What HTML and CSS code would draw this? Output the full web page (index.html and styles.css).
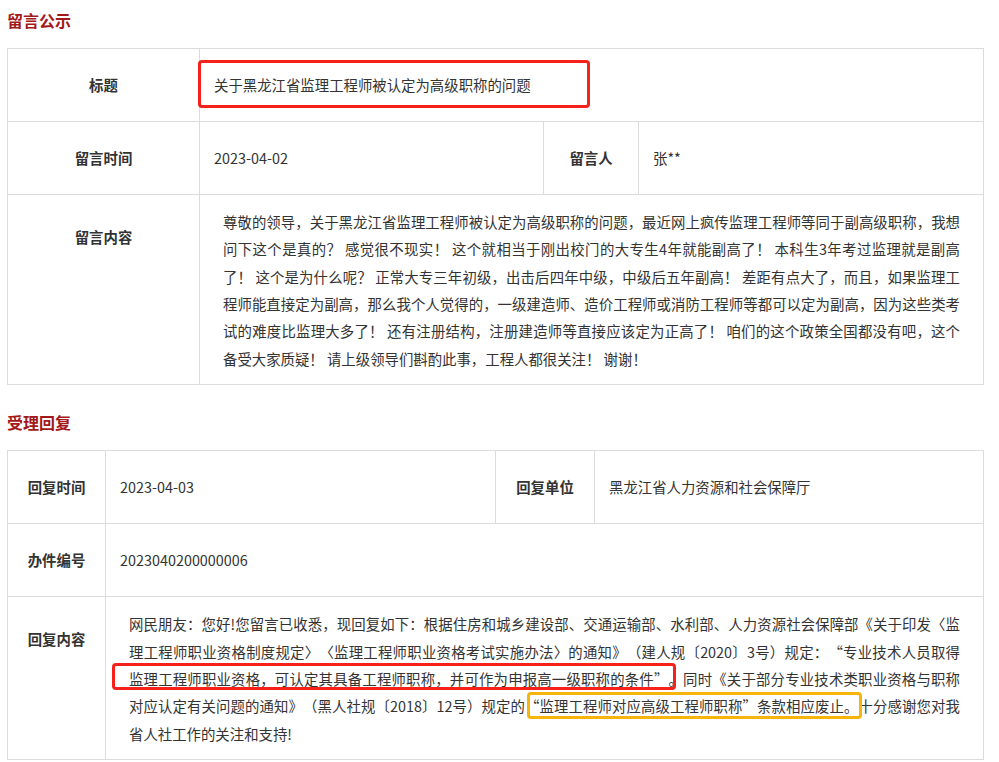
FILE: index.html
```html
<!DOCTYPE html>
<html lang="zh-CN">
<head>
<meta charset="utf-8">
<title>留言公示</title>
<link rel="stylesheet" href="styles.css">
</head>
<body>
<div class="page">
  <h2 class="sec-title">留言公示</h2>
  <div class="info-grid msg">
    <div class="cell label">标题</div>
    <div class="cell value span3"><span class="title-mark">关于黑龙江省监理工程师被认定为高级职称的问题</span></div>
    <div class="cell label">留言时间</div>
    <div class="cell value">2023-04-02</div>
    <div class="cell label">留言人</div>
    <div class="cell value">张**</div>
    <div class="cell label top">留言内容</div>
    <div class="cell content span3">尊敬的领导，关于黑龙江省监理工程师被认定为高级职称的问题，最近网上疯传监理工程师等同于副高级职称，我想问下这个是真的？ 感觉很不现实！ 这个就相当于刚出校门的大专生4年就能副高了！ 本科生3年考过监理就是副高了！ 这个是为什么呢？ 正常大专三年初级，出击后四年中级，中级后五年副高！ 差距有点大了，而且，如果监理工程师能直接定为副高，那么我个人觉得的，一级建造师、造价工程师或消防工程师等都可以定为副高，因为这些类考试的难度比监理大多了！ 还有注册结构，注册建造师等直接应该定为正高了！ 咱们的这个政策全国都没有吧，这个备受大家质疑！ 请上级领导们斟酌此事，工程人都很关注！ 谢谢！</div>
  </div>

  <h2 class="sec-title second">受理回复</h2>
  <div class="info-grid reply">
    <div class="cell label">回复时间</div>
    <div class="cell value">2023-04-03</div>
    <div class="cell label">回复单位</div>
    <div class="cell value">黑龙江省人力资源和社会保障厅</div>
    <div class="cell label">办件编号</div>
    <div class="cell value span3">2023040200000006</div>
    <div class="cell label top">回复内容</div>
    <div class="cell content span3">网民朋友：您好!您留言已收悉，现回复如下：根据住房和城乡建设部、交通运输部、水利部、人力资源社会保障部《关于印发〈监理工程师职业资格制度规定〉〈监理工程师职业资格考试实施办法〉的通知》（建人规〔2020〕3号）规定：“专业技术人员取得<span class="mark mark-red">监理工程师职业资格，可认定其具备工程师职称，并可作为申报高一级职称的条件”</span>。同时《关于部分专业技术类职业资格与职称对应认定有关问题的通知》（黑人社规〔2018〕12号）规定的<span class="mark mark-yellow">“监理工程师对应高级工程师职称”条款相应废止。</span>十分感谢您对我省人社工作的关注和支持!</div>
  </div>
</div>
</body>
</html>
```
FILE: styles.css
```css
* {
  box-sizing: border-box;
}

body {
  margin: 0;
  background: #fff;
  color: #333;
  font-family: "Noto Sans CJK SC", "Microsoft YaHei", sans-serif;
  text-spacing-trim: space-all;
}

.page {
  padding: 8px 15px 0 7px;
}

.sec-title {
  margin: 0 0 16px;
  font-size: 16px;
  line-height: 24px;
  font-weight: 700;
  color: #a31818;
}

.sec-title.second {
  margin-top: 25px;
}

.info-grid {
  display: grid;
  border-top: 1px solid #dcdcdc;
  border-left: 1px solid #dcdcdc;
  font-size: 14.4px;
}

.msg {
  grid-template-columns: 192px 344px 95px 345px;
  grid-template-rows: 73px 73px auto;
}

.reply {
  grid-template-columns: 98px 390px 99px 389px;
  grid-template-rows: 73px 73px auto;
}

.cell {
  display: flex;
  align-items: center;
  border-right: 1px solid #dcdcdc;
  border-bottom: 1px solid #dcdcdc;
  line-height: 28px;
}

.span3 {
  grid-column: 2 / span 3;
}

.label {
  justify-content: center;
  font-weight: 700;
  color: #333;
}

.label.top {
  align-items: flex-start;
  padding-top: 28px;
}

.value {
  padding-left: 14px;
}

.content {
  display: block;
  padding: 13px 23px 12px;
  line-height: 1.9;
  text-align: justify;
}

.title-mark {
  position: relative;
}

.title-mark::after {
  content: "";
  position: absolute;
  top: -11px;
  bottom: -9px;
  left: -16px;
  right: -59px;
  border: 3px solid #f5211a;
  border-radius: 4px;
}

.mark {
  position: relative;
}

.mark::after {
  content: "";
  position: absolute;
  border: 3px solid;
  border-radius: 4px;
}

.mark-red::after {
  top: -5px;
  bottom: -1px;
  left: -17px;
  right: -8px;
  border-color: #f5211a;
}

.mark-yellow::after {
  top: -3px;
  bottom: -3px;
  left: 2px;
  right: -3px;
  border-color: #f7b40c;
}
```
